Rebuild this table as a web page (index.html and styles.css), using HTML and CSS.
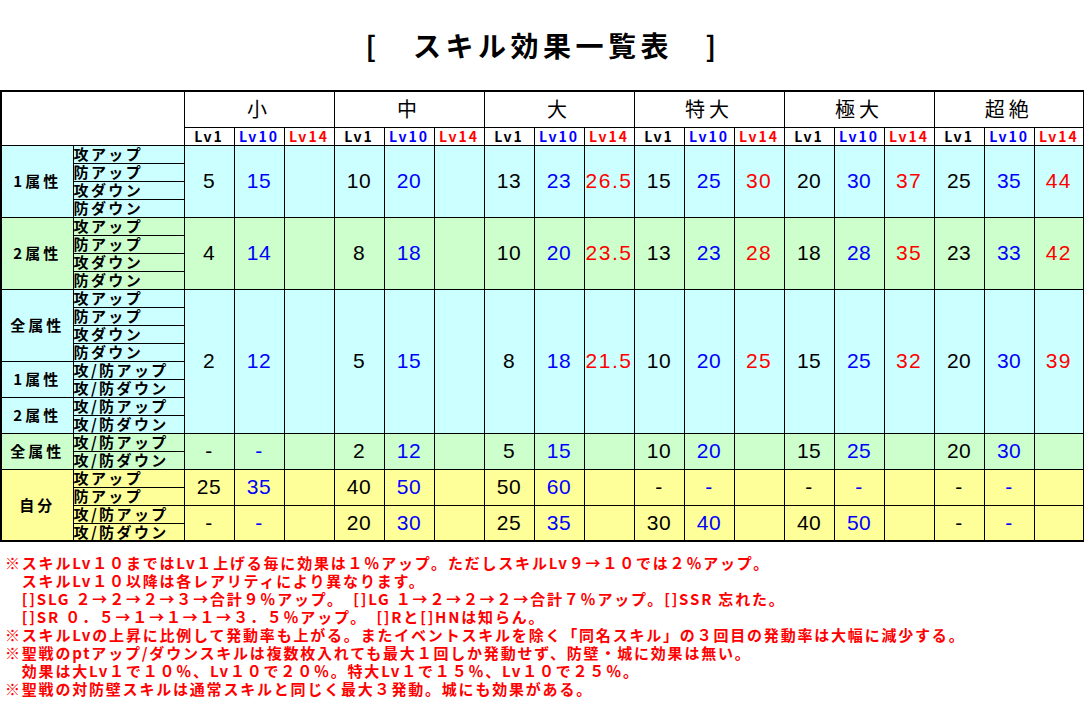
FILE: index.html
```html
<!DOCTYPE html>
<html lang="ja">
<head>
<meta charset="utf-8">
<title>スキル効果一覧表</title>
<link rel="stylesheet" href="styles.css">
</head>
<body>
<h1 class="title">[　スキル効果一覧表　]</h1>
<table class="skills">
<colgroup>
<col class="c-label"><col class="c-sub">
<col class="c-d"><col class="c-d"><col class="c-d"><col class="c-d"><col class="c-d"><col class="c-d">
<col class="c-d"><col class="c-d"><col class="c-d"><col class="c-d"><col class="c-d"><col class="c-d">
<col class="c-d"><col class="c-d"><col class="c-d"><col class="c-d"><col class="c-d"><col class="c-d">
</colgroup>
<thead>
<tr class="h1">
<th colspan="2" rowspan="2" class="corner"></th>
<th colspan="3" class="grp">小</th><th colspan="3" class="grp">中</th><th colspan="3" class="grp">大</th>
<th colspan="3" class="grp">特大</th><th colspan="3" class="grp">極大</th><th colspan="3" class="grp">超絶</th>
</tr>
<tr class="h2">
<th class="lv l1">Lv1</th><th class="lv l10">Lv10</th><th class="lv l14">Lv14</th>
<th class="lv l1">Lv1</th><th class="lv l10">Lv10</th><th class="lv l14">Lv14</th>
<th class="lv l1">Lv1</th><th class="lv l10">Lv10</th><th class="lv l14">Lv14</th>
<th class="lv l1">Lv1</th><th class="lv l10">Lv10</th><th class="lv l14">Lv14</th>
<th class="lv l1">Lv1</th><th class="lv l10">Lv10</th><th class="lv l14">Lv14</th>
<th class="lv l1">Lv1</th><th class="lv l10">Lv10</th><th class="lv l14">Lv14</th>
</tr>
</thead>
<tbody>
<!-- 1属性 -->
<tr class="cy">
<th rowspan="4" class="lab">1属性</th><td class="sub">攻アップ</td>
<td rowspan="4" class="n n1">5</td><td rowspan="4" class="n n10">15</td><td rowspan="4" class="n n14"></td>
<td rowspan="4" class="n n1">10</td><td rowspan="4" class="n n10">20</td><td rowspan="4" class="n n14"></td>
<td rowspan="4" class="n n1">13</td><td rowspan="4" class="n n10">23</td><td rowspan="4" class="n n14">26.5</td>
<td rowspan="4" class="n n1">15</td><td rowspan="4" class="n n10">25</td><td rowspan="4" class="n n14">30</td>
<td rowspan="4" class="n n1">20</td><td rowspan="4" class="n n10">30</td><td rowspan="4" class="n n14">37</td>
<td rowspan="4" class="n n1">25</td><td rowspan="4" class="n n10">35</td><td rowspan="4" class="n n14">44</td>
</tr>
<tr class="cy"><td class="sub">防アップ</td></tr>
<tr class="cy"><td class="sub">攻ダウン</td></tr>
<tr class="cy"><td class="sub">防ダウン</td></tr>
<!-- 2属性 -->
<tr class="gr">
<th rowspan="4" class="lab">2属性</th><td class="sub">攻アップ</td>
<td rowspan="4" class="n n1">4</td><td rowspan="4" class="n n10">14</td><td rowspan="4" class="n n14"></td>
<td rowspan="4" class="n n1">8</td><td rowspan="4" class="n n10">18</td><td rowspan="4" class="n n14"></td>
<td rowspan="4" class="n n1">10</td><td rowspan="4" class="n n10">20</td><td rowspan="4" class="n n14">23.5</td>
<td rowspan="4" class="n n1">13</td><td rowspan="4" class="n n10">23</td><td rowspan="4" class="n n14">28</td>
<td rowspan="4" class="n n1">18</td><td rowspan="4" class="n n10">28</td><td rowspan="4" class="n n14">35</td>
<td rowspan="4" class="n n1">23</td><td rowspan="4" class="n n10">33</td><td rowspan="4" class="n n14">42</td>
</tr>
<tr class="gr"><td class="sub">防アップ</td></tr>
<tr class="gr"><td class="sub">攻ダウン</td></tr>
<tr class="gr"><td class="sub">防ダウン</td></tr>
<!-- 全属性 / 1属性 / 2属性 -->
<tr class="cy">
<th rowspan="4" class="lab">全属性</th><td class="sub">攻アップ</td>
<td rowspan="8" class="n n1">2</td><td rowspan="8" class="n n10">12</td><td rowspan="8" class="n n14"></td>
<td rowspan="8" class="n n1">5</td><td rowspan="8" class="n n10">15</td><td rowspan="8" class="n n14"></td>
<td rowspan="8" class="n n1">8</td><td rowspan="8" class="n n10">18</td><td rowspan="8" class="n n14">21.5</td>
<td rowspan="8" class="n n1">10</td><td rowspan="8" class="n n10">20</td><td rowspan="8" class="n n14">25</td>
<td rowspan="8" class="n n1">15</td><td rowspan="8" class="n n10">25</td><td rowspan="8" class="n n14">32</td>
<td rowspan="8" class="n n1">20</td><td rowspan="8" class="n n10">30</td><td rowspan="8" class="n n14">39</td>
</tr>
<tr class="cy"><td class="sub">防アップ</td></tr>
<tr class="cy"><td class="sub">攻ダウン</td></tr>
<tr class="cy"><td class="sub">防ダウン</td></tr>
<tr class="cy"><th rowspan="2" class="lab">1属性</th><td class="sub">攻/防アップ</td></tr>
<tr class="cy"><td class="sub">攻/防ダウン</td></tr>
<tr class="cy"><th rowspan="2" class="lab">2属性</th><td class="sub">攻/防アップ</td></tr>
<tr class="cy"><td class="sub">攻/防ダウン</td></tr>
<!-- 全属性 攻/防 -->
<tr class="gr">
<th rowspan="2" class="lab">全属性</th><td class="sub">攻/防アップ</td>
<td rowspan="2" class="n n1">-</td><td rowspan="2" class="n n10">-</td><td rowspan="2" class="n n14"></td>
<td rowspan="2" class="n n1">2</td><td rowspan="2" class="n n10">12</td><td rowspan="2" class="n n14"></td>
<td rowspan="2" class="n n1">5</td><td rowspan="2" class="n n10">15</td><td rowspan="2" class="n n14"></td>
<td rowspan="2" class="n n1">10</td><td rowspan="2" class="n n10">20</td><td rowspan="2" class="n n14"></td>
<td rowspan="2" class="n n1">15</td><td rowspan="2" class="n n10">25</td><td rowspan="2" class="n n14"></td>
<td rowspan="2" class="n n1">20</td><td rowspan="2" class="n n10">30</td><td rowspan="2" class="n n14"></td>
</tr>
<tr class="gr"><td class="sub">攻/防ダウン</td></tr>
<!-- 自分 -->
<tr class="ye">
<th rowspan="4" class="lab">自分</th><td class="sub">攻アップ</td>
<td rowspan="2" class="n n1">25</td><td rowspan="2" class="n n10">35</td><td rowspan="2" class="n n14"></td>
<td rowspan="2" class="n n1">40</td><td rowspan="2" class="n n10">50</td><td rowspan="2" class="n n14"></td>
<td rowspan="2" class="n n1">50</td><td rowspan="2" class="n n10">60</td><td rowspan="2" class="n n14"></td>
<td rowspan="2" class="n n1">-</td><td rowspan="2" class="n n10">-</td><td rowspan="2" class="n n14"></td>
<td rowspan="2" class="n n1">-</td><td rowspan="2" class="n n10">-</td><td rowspan="2" class="n n14"></td>
<td rowspan="2" class="n n1">-</td><td rowspan="2" class="n n10">-</td><td rowspan="2" class="n n14"></td>
</tr>
<tr class="ye"><td class="sub">防アップ</td></tr>
<tr class="ye">
<td class="sub">攻/防アップ</td>
<td rowspan="2" class="n n1">-</td><td rowspan="2" class="n n10">-</td><td rowspan="2" class="n n14"></td>
<td rowspan="2" class="n n1">20</td><td rowspan="2" class="n n10">30</td><td rowspan="2" class="n n14"></td>
<td rowspan="2" class="n n1">25</td><td rowspan="2" class="n n10">35</td><td rowspan="2" class="n n14"></td>
<td rowspan="2" class="n n1">30</td><td rowspan="2" class="n n10">40</td><td rowspan="2" class="n n14"></td>
<td rowspan="2" class="n n1">40</td><td rowspan="2" class="n n10">50</td><td rowspan="2" class="n n14"></td>
<td rowspan="2" class="n n1">-</td><td rowspan="2" class="n n10">-</td><td rowspan="2" class="n n14"></td>
</tr>
<tr class="ye"><td class="sub">攻/防ダウン</td></tr>
</tbody>
</table>
<div class="notes">
<p>※スキルLv１０まではLv１上げる毎に効果は１％アップ。ただしスキルLv９→１０では２％アップ。</p>
<p>　スキルLv１０以降は各レアリティにより異なります。</p>
<p>　[]SLG ２→２→２→３→合計９％アップ。　[]LG １→２→２→２→合計７％アップ。[]SSR 忘れた。</p>
<p>　[]SR ０．５→１→１→１→３．５％アップ。　[]Rと[]HNは知らん。</p>
<p>※スキルLvの上昇に比例して発動率も上がる。またイベントスキルを除く「同名スキル」の３回目の発動率は大幅に減少する。</p>
<p>※聖戦のptアップ/ダウンスキルは複数枚入れても最大１回しか発動せず、防壁・城に効果は無い。</p>
<p>　効果は大Lv１で１０％、Lv１０で２０％。特大Lv１で１５％、Lv１０で２５％。</p>
<p>※聖戦の対防壁スキルは通常スキルと同じく最大３発動。城にも効果がある。</p>
</div>
</body>
</html>
```
FILE: styles.css
```css
html, body {
  margin: 0;
  padding: 0;
  background: #ffffff;
}
body {
  font-family: "Noto Sans CJK JP", "Noto Sans", sans-serif;
  color: #000000;
}
.title {
  margin: 0;
  height: 90px;
  display: flex;
  align-items: center;
  justify-content: center;
  font-size: 28px;
  font-weight: bold;
  letter-spacing: 4.5px;
  line-height: 1;
  padding-left: 2px;
  box-sizing: border-box;
}
.skills {
  border-collapse: collapse;
  table-layout: fixed;
  width: 1083px;
  border: 2px solid #000;
}
.c-label { width: 72px; }
.c-sub { width: 111px; }
.c-d { width: 50px; }
.skills th, .skills td {
  border: 1px solid #000;
  padding: 0;
  line-height: 16px;
}
.skills .h1 { height: 36px; }
.skills .h2 { height: 18px; }
.skills tbody tr { height: 18px; }
.grp {
  font-size: 20px;
  font-weight: normal;
  letter-spacing: 4px;
  padding-left: 4px;
  text-align: center;
}
.lv {
  font-size: 14px;
  font-weight: bold;
  letter-spacing: 2px;
  padding-left: 2px;
  text-align: center;
}
.l1 { color: #000; }
.l10 { color: #0000ff; }
.l14 { color: #ff0000; }
.lab {
  font-size: 15px;
  font-weight: bold;
  letter-spacing: 3px;
  padding-left: 3px;
  text-align: center;
}
.sub {
  font-size: 15px;
  font-weight: bold;
  letter-spacing: 2.4px;
  padding-left: 5px;
  text-align: left;
  white-space: nowrap;
  line-height: 16px;
}
.n {
  font-family: "Liberation Sans", sans-serif;
  font-size: 21px;
  line-height: 22px;
  text-align: center;
  vertical-align: middle;
  letter-spacing: 0.5px;
}
.n1 { color: #000; }
.n10 { color: #0000ff; }
.n14 { color: #ff0000; letter-spacing: 1.5px; }
.cy th, .cy td { background: #ccffff; }
.gr th, .gr td { background: #ccffcc; }
.ye th, .ye td { background: #ffff99; }
.corner { background: #fff; }
.notes {
  margin-top: 12px;
  padding-left: 5px;
  color: #ff0000;
  font-size: 15px;
  font-weight: bold;
  letter-spacing: 1.8px;
  line-height: 18px;
}
.notes p {
  margin: 0;
  white-space: nowrap;
}
```
